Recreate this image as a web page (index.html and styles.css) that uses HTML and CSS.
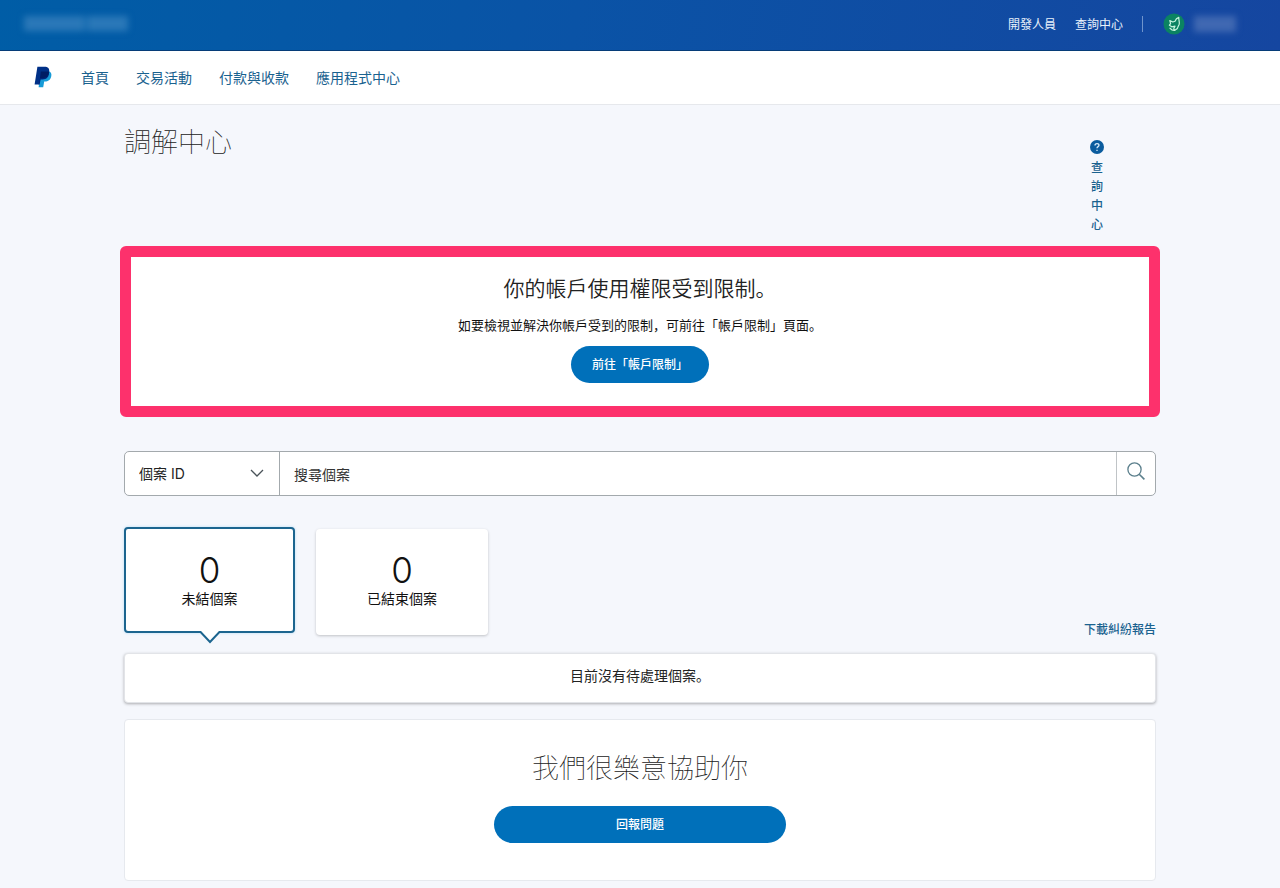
FILE: index.html
```html
<!DOCTYPE html>
<html lang="zh-Hant">
<head>
<meta charset="utf-8">
<meta name="viewport" content="width=device-width, initial-scale=1">
<title>調解中心</title>
<link rel="stylesheet" href="styles.css">
</head>
<body>
<header>
  <div class="topbar">
    <span class="redacted redacted-name"><i></i><i></i></span>
    <div class="topbar-links">
      <a href="#">開發人員</a>
      <a href="#">查詢中心</a>
      <span class="divider"></span>
      <a class="account" href="#" aria-label="帳戶">
        <svg width="22" height="22" viewBox="0 0 22 22" aria-hidden="true">
          <circle cx="11" cy="11" r="10.5" fill="#0b8362"/>
          <path d="M15.8 4.4C13.8 5 12.6 6.4 12 8.2L9.8 9 6.8 7.6 7.6 10.6 6.4 12.2 8.8 13.8 12 13.2 10.8 15.6 11.6 17.4 14.4 15.4C15 13.6 15.6 12.4 16.2 11.2 16.8 9.4 15.6 7.2 15.8 4.4ZM7 15.2 8.8 16.8 11.4 17.4" fill="none" stroke="#c6f5df" stroke-width="1.2" stroke-linejoin="round" stroke-linecap="round"/>
        </svg>
        <span class="redacted redacted-user"></span>
      </a>
    </div>
  </div>
  <nav class="mainnav">
    <a class="logo" href="#" aria-label="PayPal">
      <svg width="18" height="22" viewBox="0 0 18 22" aria-hidden="true">
        <path d="M6.4 5.2H14.8C17.1 6.1 17.9 8 17.2 10.4 16.4 14 14.1 15.4 11 15.4H10.2L9.2 21.2H4.6L5 18.3Z" fill="#179bd7"/>
        <path d="M5.2 7H14.8C15.2 10.8 12.6 13.4 8.6 13.4H6.6L5.6 18.5H4.4Z" fill="#00257c"/>
        <path d="M3.4.8H10.4C14 .8 15.7 2.6 15.2 6 14.6 10.2 12 12.2 8 12.2H6L4.9 18.6H.6Z" fill="#003087"/>
        <path d="M6.8 5.6H14.2C14.8 5.7 15.1 5.8 15.2 6 14.6 10.2 12 12.2 8 12.2H6Z" fill="#001c64"/>
      </svg>
    </a>
    <a href="#">首頁</a>
    <a href="#">交易活動</a>
    <a href="#">付款與收款</a>
    <a href="#">應用程式中心</a>
  </nav>
</header>

<main class="page">
  <div class="page-head">
    <h1>調解中心</h1>
    <a class="help" href="#">
      <svg width="14" height="14" viewBox="0 0 14 14" aria-hidden="true">
        <circle cx="7" cy="7" r="7" fill="#0b5c9e"/>
        <path d="M5 5.4C5 2.9 9 3 9 5.3 9 6.7 7 6.6 7 8.3M7 9.7V10.9" fill="none" stroke="#d9ecfa" stroke-width="1.3"/>
      </svg>
      <span>查詢中心</span>
    </a>
  </div>

  <section class="alert">
    <h2>你的帳戶使用權限受到限制<span lang="zh-Hans">。</span></h2>
    <p>如要檢視並解決你帳戶受到的限制<span lang="zh-Hans">，</span>可前往「帳戶限制」頁面<span lang="zh-Hans">。</span></p>
    <button class="btn" type="button">前往「帳戶限制」</button>
  </section>

  <form class="search">
    <div class="select-wrap">
      <select aria-label="搜尋類型"><option>個案 ID</option></select>
      <svg width="14" height="8" viewBox="0 0 14 8" aria-hidden="true"><path d="M1 1 7 7 13 1" fill="none" stroke="#4a5359" stroke-width="1.3"/></svg>
    </div>
    <input type="text" placeholder="搜尋個案" aria-label="搜尋個案">
    <button class="search-btn" type="button" aria-label="搜尋">
      <svg width="20" height="20" viewBox="0 0 20 20" aria-hidden="true"><circle cx="8.5" cy="8.5" r="6.6" fill="none" stroke="#5b7f8c" stroke-width="1.3"/><path d="M13.2 13.2 18.4 18.4" stroke="#5b7f8c" stroke-width="1.6"/></svg>
    </button>
  </form>

  <div class="summary">
    <button class="case-card selected" type="button">
      <span class="count">0</span>
      <span>未結個案</span>
      <svg class="pointer" width="22" height="13" viewBox="0 0 22 13" aria-hidden="true"><path d="M0 0H22V2H20L11 11.5 2 2H0Z" fill="#fff"/><path d="M0 1H1.6L11 11 20.4 1H22" fill="none" stroke="#1c658f" stroke-width="2"/></svg>
    </button>
    <button class="case-card" type="button">
      <span class="count">0</span>
      <span>已結束個案</span>
    </button>
    <a class="report" href="#">下載糾紛報告</a>
  </div>

  <p class="notice">目前沒有待處理個案<span lang="zh-Hans">。</span></p>

  <section class="assist">
    <h2>我們很樂意協助你</h2>
    <button class="btn btn-wide" type="button">回報問題</button>
  </section>
</main>
</body>
</html>
```
FILE: styles.css
```css
* { box-sizing: border-box; }
body {
  margin: 0;
  background: #f5f7fc;
  color: #222;
  font: 14px/20px "Noto Sans CJK SC", "Noto Sans CJK TC", sans-serif;
}
h1, h2, p { margin: 0; }
a { color: #1a628f; text-decoration: none; }
button, input, select { font: inherit; color: inherit; }
svg { display: block; }

.topbar {
  display: flex;
  align-items: center;
  justify-content: space-between;
  height: 51px;
  padding: 0 44px 3px 24px;
  background: linear-gradient(100deg, #005da6 0%, #0a53a6 45%, #1546a0 100%);
  border-bottom: 1px solid #063c78;
}
.topbar-links { display: flex; align-items: center; font-size: 12px; }
.topbar-links a { color: #e8f1fb; }
.topbar-links a + a { margin-left: 19px; }
.divider { width: 1px; height: 16px; margin: 0 20px 0 19px; background: #6f94cc; }
.topbar-links .account { display: flex; align-items: center; gap: 9px; }
.redacted { display: flex; gap: 2px; filter: blur(3px); }
.redacted i { height: 15px; background: #2a78b8; }
.redacted-name { width: 104px; }
.redacted-name i { flex: 6; }
.redacted-name i + i { flex: 4; }
.redacted-user { width: 42px; height: 16px; background: #4068b2; }

.mainnav {
  display: flex;
  align-items: center;
  gap: 27px;
  height: 54px;
  padding: 0 34px 2px;
  background: #fff;
  border-bottom: 1px solid #e6e8ec;
}
.logo { margin-right: 2px; }

.page { padding: 0 124px 7px; }
.page-head {
  display: flex;
  justify-content: space-between;
  padding: 16px 52px 13px 0;
}
h1, .assist h2 { font-size: 27px; line-height: 40px; font-weight: 100; }
.help {
  width: 14px;
  padding-top: 19px;
  font-size: 12px;
  font-weight: 500;
  text-align: center;
}
.help span { display: block; margin-top: 3px; padding: 0 1px; line-height: 19px; word-break: break-all; }

.alert {
  display: flex;
  flex-direction: column;
  align-items: center;
  margin: 0 -4px;
  padding: 14px 0 23px;
  background: #fff;
  border: 11px solid #fd316c;
  border-radius: 6px;
}
.alert h2 { font-size: 21px; line-height: 32px; font-weight: 350; }
.alert p { margin: 12px 0 11px; font-size: 13px; color: #111; }
.btn {
  height: 37px;
  padding: 0 20px 1px;
  border: 0;
  border-radius: 19px;
  background: #0070ba;
  color: #fff;
  font-size: 12px;
  font-weight: 500;
}
.alert .btn { min-width: 138px; }

.search {
  display: flex;
  height: 45px;
  margin-top: 34px;
  background: #fff;
  border: 1px solid #a3a9ad;
  border-radius: 5px;
}
.select-wrap { position: relative; width: 155px; border-right: 1px solid #a3a9ad; }
.select-wrap select {
  appearance: none;
  width: 100%;
  height: 100%;
  padding: 0 14px;
  border: 0;
  background: transparent;
  font-family: Inter, "Noto Sans CJK SC", sans-serif;
}
.select-wrap svg { position: absolute; right: 15px; top: 17px; pointer-events: none; }
.search input { flex: 1; min-width: 0; padding: 0 14px; border: 0; background: transparent; }
.search input::placeholder { color: #333; opacity: 1; }
.search-btn {
  width: 39px;
  padding: 0 9px 5px;
  border: 0;
  border-left: 1px solid #c0c4c7;
  background: transparent;
}

.summary { display: flex; gap: 21px; margin-top: 31px; }
.case-card {
  position: relative;
  display: flex;
  flex-direction: column;
  align-items: center;
  width: 172px;
  height: 106px;
  margin-top: 2px;
  padding: 24px 0 0;
  border: 0;
  border-radius: 4px;
  background: #fff;
  color: #111;
  box-shadow: 0 1px 3px rgba(0, 0, 0, .22);
}
.case-card.selected {
  width: 171px;
  margin: 0 0 2px;
  border: 2px solid #1c658f;
  box-shadow: 0 0 3px #b5dcf5;
}
.count { font: 300 35px/35px Inter, sans-serif; }
.pointer { position: absolute; left: 50%; bottom: -13px; margin-left: -11px; }
.report {
  margin: auto 0 -4px auto;
  font-size: 12px;
  font-weight: 500;
}
.notice {
  margin-top: 18px;
  padding: 11px 0 17px;
  background: #fff;
  border: 1px solid #e2e4e8;
  border-radius: 4px;
  box-shadow: 0 1px 3px rgba(0, 0, 0, .3);
  text-align: center;
}
.assist {
  display: flex;
  flex-direction: column;
  align-items: center;
  gap: 19px;
  margin-top: 16px;
  padding: 27px 0 37px;
  background: #fff;
  border: 1px solid #e6e9ee;
  border-radius: 4px;
}
.btn-wide { width: 292px; }
```
